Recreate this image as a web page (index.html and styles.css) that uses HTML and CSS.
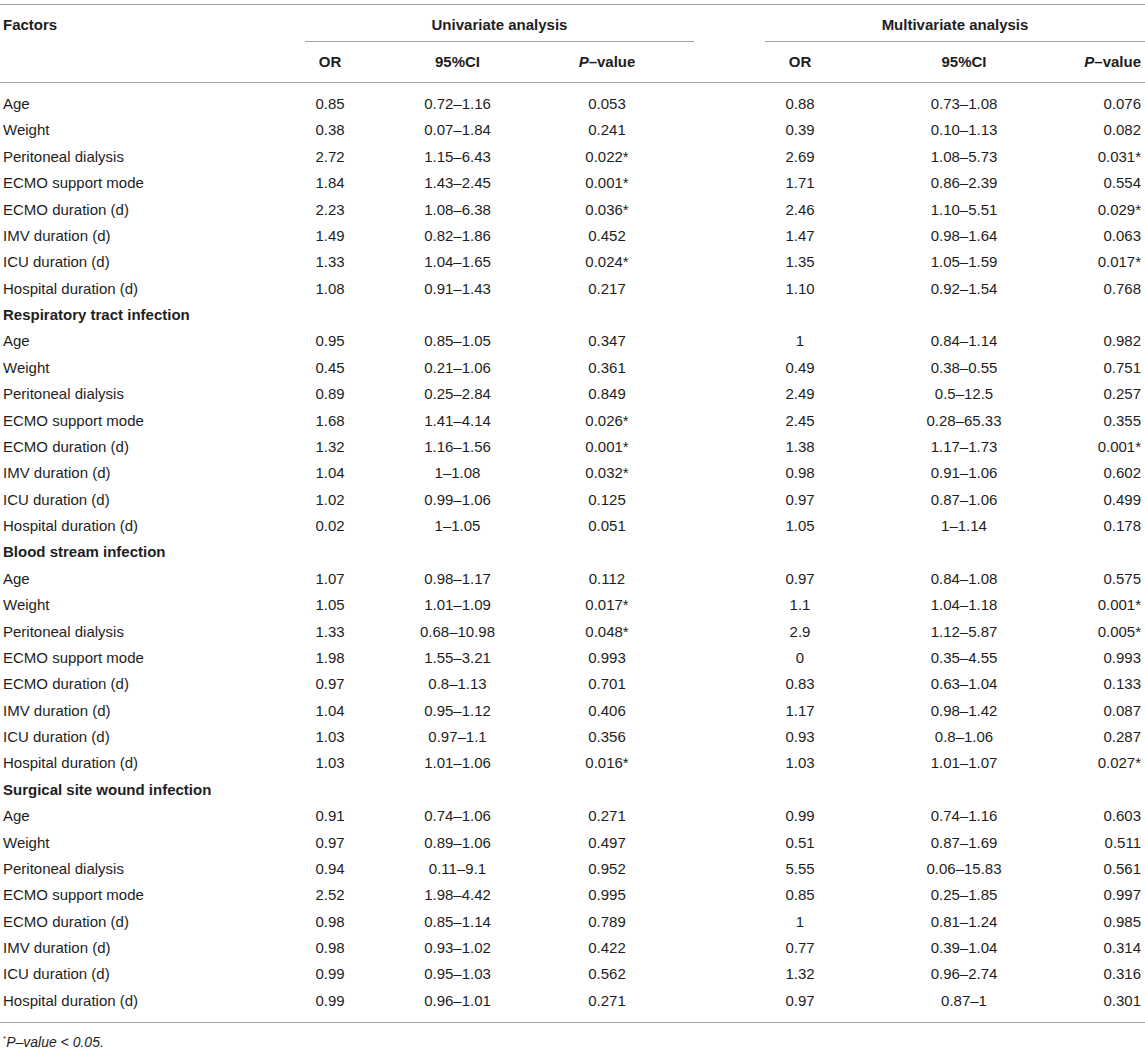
FILE: index.html
```html
<!DOCTYPE html>
<html>
<head>
<meta charset="utf-8">
<link rel="stylesheet" href="styles.css">
</head>
<body>
<div class="wrap">
<table class="tbl">
<colgroup>
<col class="c-factor"><col class="c-or1"><col class="c-ci1"><col class="c-p1"><col class="c-or2"><col class="c-ci2"><col class="c-p2">
</colgroup>
<thead>
<tr class="h1">
<th class="factor">Factors</th>
<th colspan="3" class="grp"><div class="grp-line uni">Univariate analysis</div></th>
<th colspan="3" class="grp"><div class="grp-line multi">Multivariate analysis</div></th>
</tr>
<tr class="h2">
<th></th>
<th>OR</th><th>95%CI</th><th><i>P</i>–value</th>
<th>OR</th><th>95%CI</th><th class="last"><i>P</i>–value</th>
</tr>
</thead>
<tbody>
<tr class="first"><td class="factor">Age</td><td>0.85</td><td>0.72–1.16</td><td>0.053</td><td>0.88</td><td>0.73–1.08</td><td class="last">0.076</td></tr>
<tr><td class="factor">Weight</td><td>0.38</td><td>0.07–1.84</td><td>0.241</td><td>0.39</td><td>0.10–1.13</td><td class="last">0.082</td></tr>
<tr><td class="factor">Peritoneal dialysis</td><td>2.72</td><td>1.15–6.43</td><td>0.022*</td><td>2.69</td><td>1.08–5.73</td><td class="last">0.031*</td></tr>
<tr><td class="factor">ECMO support mode</td><td>1.84</td><td>1.43–2.45</td><td>0.001*</td><td>1.71</td><td>0.86–2.39</td><td class="last">0.554</td></tr>
<tr><td class="factor">ECMO duration (d)</td><td>2.23</td><td>1.08–6.38</td><td>0.036*</td><td>2.46</td><td>1.10–5.51</td><td class="last">0.029*</td></tr>
<tr><td class="factor">IMV duration (d)</td><td>1.49</td><td>0.82–1.86</td><td>0.452</td><td>1.47</td><td>0.98–1.64</td><td class="last">0.063</td></tr>
<tr><td class="factor">ICU duration (d)</td><td>1.33</td><td>1.04–1.65</td><td>0.024*</td><td>1.35</td><td>1.05–1.59</td><td class="last">0.017*</td></tr>
<tr><td class="factor">Hospital duration (d)</td><td>1.08</td><td>0.91–1.43</td><td>0.217</td><td>1.10</td><td>0.92–1.54</td><td class="last">0.768</td></tr>
<tr class="sect"><td colspan="7" class="factor">Respiratory tract infection</td></tr>
<tr><td class="factor">Age</td><td>0.95</td><td>0.85–1.05</td><td>0.347</td><td>1</td><td>0.84–1.14</td><td class="last">0.982</td></tr>
<tr><td class="factor">Weight</td><td>0.45</td><td>0.21–1.06</td><td>0.361</td><td>0.49</td><td>0.38–0.55</td><td class="last">0.751</td></tr>
<tr><td class="factor">Peritoneal dialysis</td><td>0.89</td><td>0.25–2.84</td><td>0.849</td><td>2.49</td><td>0.5–12.5</td><td class="last">0.257</td></tr>
<tr><td class="factor">ECMO support mode</td><td>1.68</td><td>1.41–4.14</td><td>0.026*</td><td>2.45</td><td>0.28–65.33</td><td class="last">0.355</td></tr>
<tr><td class="factor">ECMO duration (d)</td><td>1.32</td><td>1.16–1.56</td><td>0.001*</td><td>1.38</td><td>1.17–1.73</td><td class="last">0.001*</td></tr>
<tr><td class="factor">IMV duration (d)</td><td>1.04</td><td>1–1.08</td><td>0.032*</td><td>0.98</td><td>0.91–1.06</td><td class="last">0.602</td></tr>
<tr><td class="factor">ICU duration (d)</td><td>1.02</td><td>0.99–1.06</td><td>0.125</td><td>0.97</td><td>0.87–1.06</td><td class="last">0.499</td></tr>
<tr><td class="factor">Hospital duration (d)</td><td>0.02</td><td>1–1.05</td><td>0.051</td><td>1.05</td><td>1–1.14</td><td class="last">0.178</td></tr>
<tr class="sect"><td colspan="7" class="factor">Blood stream infection</td></tr>
<tr><td class="factor">Age</td><td>1.07</td><td>0.98–1.17</td><td>0.112</td><td>0.97</td><td>0.84–1.08</td><td class="last">0.575</td></tr>
<tr><td class="factor">Weight</td><td>1.05</td><td>1.01–1.09</td><td>0.017*</td><td>1.1</td><td>1.04–1.18</td><td class="last">0.001*</td></tr>
<tr><td class="factor">Peritoneal dialysis</td><td>1.33</td><td>0.68–10.98</td><td>0.048*</td><td>2.9</td><td>1.12–5.87</td><td class="last">0.005*</td></tr>
<tr><td class="factor">ECMO support mode</td><td>1.98</td><td>1.55–3.21</td><td>0.993</td><td>0</td><td>0.35–4.55</td><td class="last">0.993</td></tr>
<tr><td class="factor">ECMO duration (d)</td><td>0.97</td><td>0.8–1.13</td><td>0.701</td><td>0.83</td><td>0.63–1.04</td><td class="last">0.133</td></tr>
<tr><td class="factor">IMV duration (d)</td><td>1.04</td><td>0.95–1.12</td><td>0.406</td><td>1.17</td><td>0.98–1.42</td><td class="last">0.087</td></tr>
<tr><td class="factor">ICU duration (d)</td><td>1.03</td><td>0.97–1.1</td><td>0.356</td><td>0.93</td><td>0.8–1.06</td><td class="last">0.287</td></tr>
<tr><td class="factor">Hospital duration (d)</td><td>1.03</td><td>1.01–1.06</td><td>0.016*</td><td>1.03</td><td>1.01–1.07</td><td class="last">0.027*</td></tr>
<tr class="sect"><td colspan="7" class="factor">Surgical site wound infection</td></tr>
<tr><td class="factor">Age</td><td>0.91</td><td>0.74–1.06</td><td>0.271</td><td>0.99</td><td>0.74–1.16</td><td class="last">0.603</td></tr>
<tr><td class="factor">Weight</td><td>0.97</td><td>0.89–1.06</td><td>0.497</td><td>0.51</td><td>0.87–1.69</td><td class="last">0.511</td></tr>
<tr><td class="factor">Peritoneal dialysis</td><td>0.94</td><td>0.11–9.1</td><td>0.952</td><td>5.55</td><td>0.06–15.83</td><td class="last">0.561</td></tr>
<tr><td class="factor">ECMO support mode</td><td>2.52</td><td>1.98–4.42</td><td>0.995</td><td>0.85</td><td>0.25–1.85</td><td class="last">0.997</td></tr>
<tr><td class="factor">ECMO duration (d)</td><td>0.98</td><td>0.85–1.14</td><td>0.789</td><td>1</td><td>0.81–1.24</td><td class="last">0.985</td></tr>
<tr><td class="factor">IMV duration (d)</td><td>0.98</td><td>0.93–1.02</td><td>0.422</td><td>0.77</td><td>0.39–1.04</td><td class="last">0.314</td></tr>
<tr><td class="factor">ICU duration (d)</td><td>0.99</td><td>0.95–1.03</td><td>0.562</td><td>1.32</td><td>0.96–2.74</td><td class="last">0.316</td></tr>
<tr class="lastrow"><td class="factor">Hospital duration (d)</td><td>0.99</td><td>0.96–1.01</td><td>0.271</td><td>0.97</td><td>0.87–1</td><td class="last">0.301</td></tr>
</tbody>
</table>
<p class="note"><sup>*</sup>P–value &lt; 0.05.</p>
</div>
</body>
</html>
```
FILE: styles.css
```css
html, body {
  margin: 0;
  padding: 0;
  background: #ffffff;
  overflow: hidden;
}
.wrap {
  padding-top: 4px;
  font-family: "Liberation Sans", Arial, sans-serif;
  color: #1e1e1e;
}
.tbl {
  width: 1145px;
  border-collapse: collapse;
  table-layout: fixed;
  font-size: 15px;
  line-height: 18px;
  border-top: 1px solid #a3a3a3;
  border-bottom: 1px solid #a3a3a3;
}
.c-factor { width: 265px; }
.c-or1 { width: 130px; }
.c-ci1 { width: 125px; }
.c-p1 { width: 174px; }
.c-or2 { width: 212px; }
.c-ci2 { width: 116px; }
.c-p2 { width: 123px; }

.tbl th {
  font-weight: bold;
  text-align: center;
  padding: 0;
  vertical-align: top;
}
.h1 th.factor {
  text-align: left;
  padding: 11px 0 0 3px;
}
.grp-line {
  padding: 11px 0 7px;
  border-bottom: 1px solid #a3a3a3;
}
.grp-line.uni { margin-left: 40px; }
.grp-line.multi { margin-left: 71px; }
.h2 th {
  padding: 11px 0 11px;
  border-bottom: 1px solid #a3a3a3;
}
.h2 th.last {
  text-align: right;
  padding-right: 4px;
}
.tbl td {
  text-align: center;
  padding: 4.2px 0;
  white-space: nowrap;
}
.tbl td.factor {
  text-align: left;
  padding-left: 3px;
}
.tbl td.last {
  text-align: right;
  padding-right: 4px;
}
.sect td {
  font-weight: bold;
}
.first td {
  padding-top: 12px;
}
.lastrow td {
  padding-bottom: 12px;
}
.note {
  margin: 10px 0 0 3px;
  font-size: 14px;
  line-height: 18px;
  font-style: italic;
}
.note sup {
  font-size: 8px;
  vertical-align: 6px;
  line-height: 0;
  font-style: normal;
}
```
